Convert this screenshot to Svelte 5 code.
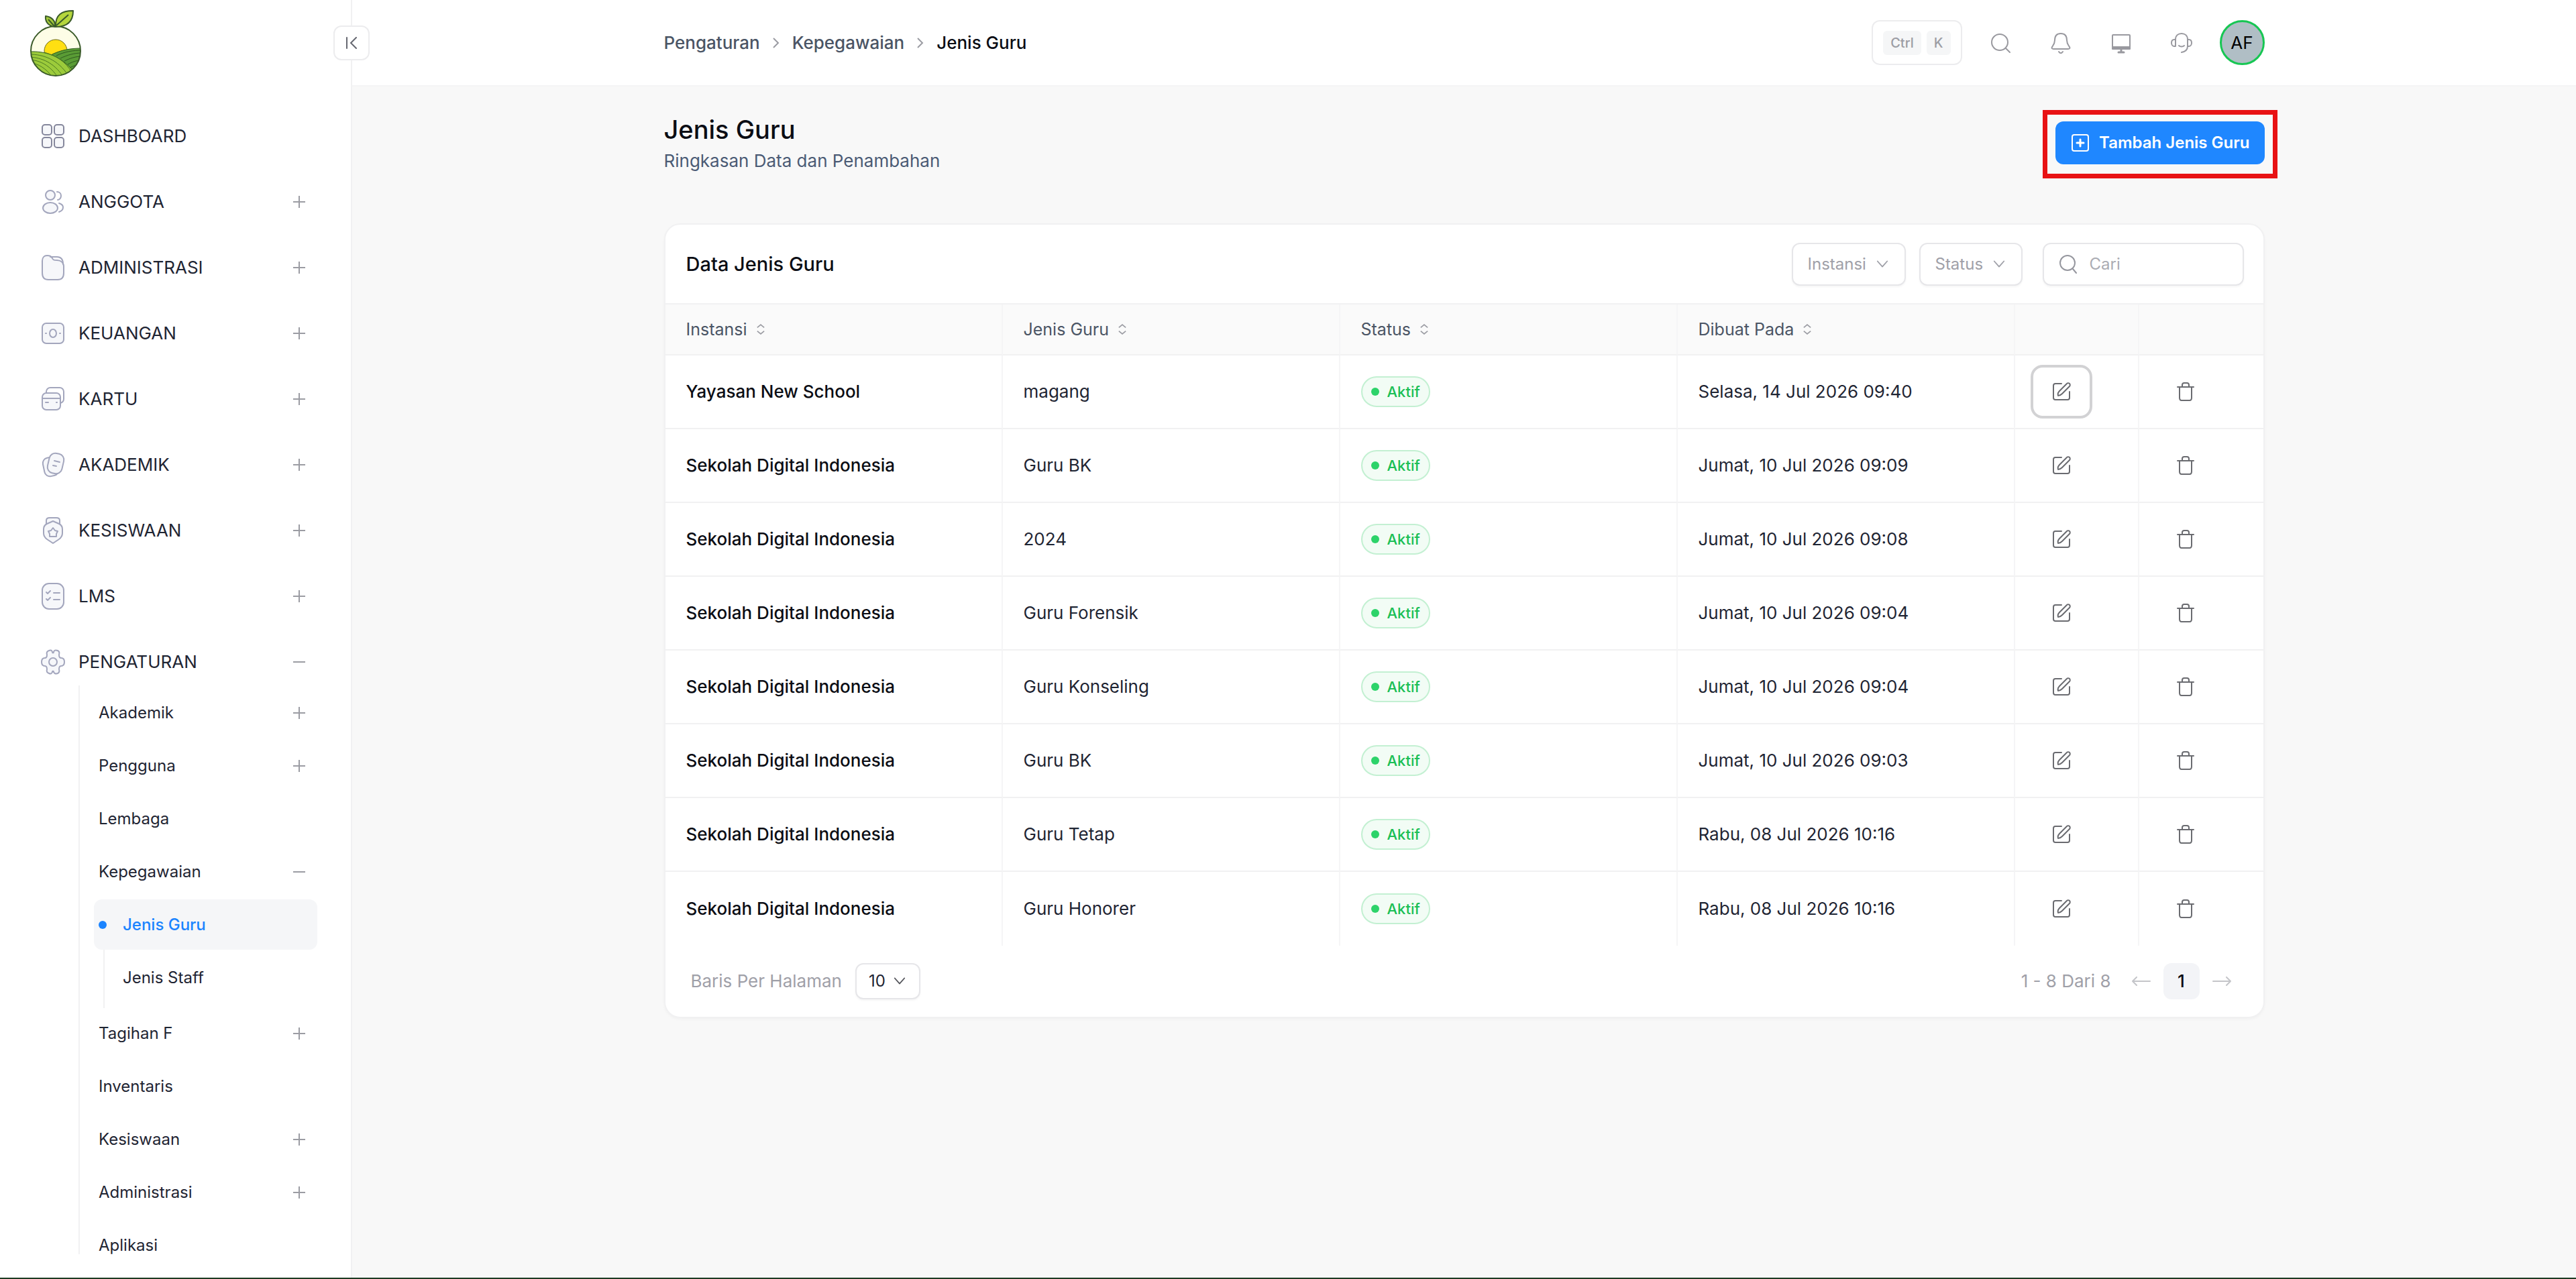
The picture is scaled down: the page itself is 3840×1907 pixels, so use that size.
<script lang="ts">
  type MenuItem = {
    label: string;
    icon?: string;
    expandable?: boolean;
    open?: boolean;
    active?: boolean;
    children?: MenuItem[];
  };

  const menu: MenuItem[] = [
    { label: 'DASHBOARD', icon: 'dashboard' },
    { label: 'ANGGOTA', icon: 'users', expandable: true },
    { label: 'ADMINISTRASI', icon: 'folder', expandable: true },
    { label: 'KEUANGAN', icon: 'money', expandable: true },
    { label: 'KARTU', icon: 'cards', expandable: true },
    { label: 'AKADEMIK', icon: 'notes', expandable: true },
    { label: 'KESISWAAN', icon: 'medal', expandable: true },
    { label: 'LMS', icon: 'checklist', expandable: true }
  ];

  const settings: MenuItem[] = [
    { label: 'Akademik', expandable: true },
    { label: 'Pengguna', expandable: true },
    { label: 'Lembaga' },
    {
      label: 'Kepegawaian',
      expandable: true,
      open: true,
      children: [{ label: 'Jenis Guru', active: true }, { label: 'Jenis Staff' }]
    },
    { label: 'Tagihan F', expandable: true },
    { label: 'Inventaris' },
    { label: 'Kesiswaan', expandable: true },
    { label: 'Administrasi', expandable: true },
    { label: 'Aplikasi' }
  ];

  const columns = ['Instansi', 'Jenis Guru', 'Status', 'Dibuat Pada'];

  const rows = [
    { instansi: 'Yayasan New School', jenis: 'magang', dibuat: 'Selasa, 14 Jul 2026 09:40' },
    { instansi: 'Sekolah Digital Indonesia', jenis: 'Guru BK', dibuat: 'Jumat, 10 Jul 2026 09:09' },
    { instansi: 'Sekolah Digital Indonesia', jenis: '2024', dibuat: 'Jumat, 10 Jul 2026 09:08' },
    { instansi: 'Sekolah Digital Indonesia', jenis: 'Guru Forensik', dibuat: 'Jumat, 10 Jul 2026 09:04' },
    { instansi: 'Sekolah Digital Indonesia', jenis: 'Guru Konseling', dibuat: 'Jumat, 10 Jul 2026 09:04' },
    { instansi: 'Sekolah Digital Indonesia', jenis: 'Guru BK', dibuat: 'Jumat, 10 Jul 2026 09:03' },
    { instansi: 'Sekolah Digital Indonesia', jenis: 'Guru Tetap', dibuat: 'Rabu, 08 Jul 2026 10:16' },
    { instansi: 'Sekolah Digital Indonesia', jenis: 'Guru Honorer', dibuat: 'Rabu, 08 Jul 2026 10:16' }
  ];

  let selectedRow = $state(0);
  let search = $state('');
  let settingsOpen = $state(true);
</script>

{#snippet menuIcon(name?: string)}
  <svg class="menu-icon" viewBox="0 0 36 40" fill="#f6f7fa" stroke="#a3a6bd" stroke-width="2" stroke-linecap="round" stroke-linejoin="round">
    {#if name === 'dashboard'}
      <g stroke="#85879c">
        <rect x="2" y="3" width="14" height="15" rx="4" />
        <rect x="20" y="3" width="14" height="15" rx="4" />
        <rect x="2" y="22" width="14" height="15" rx="4" />
        <rect x="20" y="22" width="14" height="15" rx="4" />
      </g>
    {:else if name === 'users'}
      <circle cx="14" cy="10" r="7" />
      <ellipse cx="14" cy="29" rx="11" ry="8" />
      <path fill="none" d="M24 5c3 0 6 2 6 6s-3 6-5 6M27 22c3 1 6 3 6 6 0 4-3 6-6 7" />
    {:else if name === 'folder'}
      <path d="M2 10c0-5 3-8 7-8 5 0 6 1 8 4 1 3 3 3 7 3 6 0 10 4 10 9v10c0 6-3 10-9 10H11c-6 0-9-4-9-10z" />
      <path fill="none" d="M14 4h10c6 0 9 4 9 11" />
    {:else if name === 'money'}
      <rect x="2" y="5" width="32" height="30" rx="6" />
      <ellipse cx="18" cy="20" rx="5" ry="6" />
      <path d="M7 20h1M28 20h1" />
    {:else if name === 'cards'}
      <rect x="8" y="3" width="26" height="23" rx="6" fill="#fff" />
      <rect x="2" y="11" width="27" height="25" rx="6" />
      <path d="M2 19h27M7 25h4M23 25h1" />
    {:else if name === 'notes'}
      <rect x="4" y="9" width="21" height="28" rx="8" transform="rotate(-12 14 23)" />
      <rect x="11" y="3" width="22" height="30" rx="9" transform="rotate(13 22 18)" />
      <path d="M20 14l8 2M18 21l5 1" />
    {:else if name === 'medal'}
      <path d="M8 10V5c0-3 2-4 5-4h10c3 0 5 1 5 4v5" />
      <path d="M18 6l9 4c4 2 5 4 5 8v6c0 4-1 6-5 9l-9 6-9-6c-4-3-5-5-5-9v-6c0-4 1-6 5-8z" />
      <path d="M18 16l3 4 4 1-2 4v4H13v-4l-2-4 4-1z" />
    {:else if name === 'checklist'}
      <rect x="2" y="1" width="32" height="38" rx="10" />
      <path fill="none" d="M8 14l2 2 4-4M8 24l2 2 4-4M19 15h9M19 25h9" />
    {:else}
      <path d="M12 3c2-1 4-1 5 2 0 2 2 2 2 0 1-3 3-3 6-2 2 1 3 3 2 6 0 3 1 5 3 5 3 0 5 2 5 6s-2 6-5 6c-2 0-3 2-3 5 1 3 0 5-2 6-3 1-5 1-6-2 0-2-2-2-2 0-1 3-3 3-5 2-3-1-4-3-3-6 0-3-1-5-3-5-3 0-5-2-5-6s2-6 5-6c2 0 3-2 3-5-1-3 0-5 3-6z" />
      <circle cx="18" cy="20" r="6" />
    {/if}
  </svg>
{/snippet}

{#snippet sign(open?: boolean)}
  <svg class="sign" viewBox="0 0 18 18" stroke="#9b9ca3" stroke-width="2">
    <path d={open ? 'M0 9h18' : 'M0 9h18M9 0v18'} />
  </svg>
{/snippet}

{#snippet chevron()}
  <svg class="chevron" viewBox="0 0 20 12" fill="none" stroke="currentColor" stroke-width="2" stroke-linecap="round" stroke-linejoin="round">
    <path d="M2 1l8 9 8-9" />
  </svg>
{/snippet}

<div class="layout">
  <aside class="sidebar">
    <a class="logo" href="#home" aria-label="Beranda">
      <svg viewBox="0 0 78 102" stroke-linejoin="round">
        <defs>
          <clipPath id="fruit"><ellipse cx="39" cy="62" rx="37" ry="37" /></clipPath>
        </defs>
        <g clip-path="url(#fruit)">
          <rect y="24" width="78" height="78" fill="#fdfde6" />
          <circle cx="39" cy="62" r="17" fill="#ffdf12" stroke="#6b6a1c" />
          <path d="M30 69C46 60 62 58 78 58v44H50z" fill="#5a9c35" stroke="#2f5a20" />
          <path d="M40 69c12-6 25-8 38-8M46 73c10-5 21-8 32-8M52 77c8-4 17-7 26-7M57 82c7-4 13-6 21-6M60 87c6-3 11-5 18-6" fill="none" stroke="#2f5a20" />
          <path d="M0 63c22-1 46 5 66 30L50 102H0z" fill="#9ccb3b" stroke="#2f5a20" />
          <path d="M0 67c20 0 42 7 58 32M0 71c18 1 36 8 50 29M0 75c16 1 31 9 42 26M0 79c13 2 25 9 34 22M0 84c10 2 19 8 26 16M22 64c18 5 32 14 41 30" fill="none" stroke="#4c7a23" />
        </g>
        <ellipse cx="39" cy="62" rx="37" ry="37" fill="none" stroke="#3b5b2a" stroke-width="2" />
        <path d="M39 26C38 8 48 2 65 2c0 14-6 24-26 24z" fill="#b5d63c" stroke="#3b5b2a" stroke-width="2" />
        <path d="M38 26C28 25 23 18 24 10c9 1 15 7 14 16z" fill="#a3c93a" stroke="#3b5b2a" stroke-width="2" />
        <path d="M40 24L58 8M37 25l-9-10" stroke="#3b5b2a" stroke-width="2" />
      </svg>
    </a>

    <button class="collapse" type="button" aria-label="Ciutkan menu">
      <svg viewBox="0 0 18 18" fill="none" stroke="#666871" stroke-width="2" stroke-linecap="round">
        <path d="M2 1v16M16 1L8 9l8 8" />
      </svg>
    </button>

    <nav class="menu">
      {#each menu as item}
        <button class="menu-item" type="button">
          {@render menuIcon(item.icon)}
          <span class="menu-label">{item.label}</span>
          {#if item.expandable}{@render sign()}{/if}
        </button>
      {/each}
      <button class="menu-item" type="button" aria-expanded={settingsOpen} onclick={() => (settingsOpen = !settingsOpen)}>
        {@render menuIcon()}
        <span class="menu-label">PENGATURAN</span>
        {@render sign(settingsOpen)}
      </button>
    </nav>

    {#if settingsOpen}
      <ul class="submenu">
        {#each settings as item}
          <li>
            <a class="sub-item" href="#{item.label}">
              <span class="menu-label">{item.label}</span>
              {#if item.expandable}{@render sign(item.open)}{/if}
            </a>
            {#if item.children}
              <ul class="nested">
                {#each item.children as child}
                  <li>
                    <a class="sub-item nested-item" class:active={child.active} href="#{child.label}">
                      <span class="dot"></span>
                      {child.label}
                    </a>
                  </li>
                {/each}
              </ul>
            {/if}
          </li>
        {/each}
      </ul>
    {/if}
  </aside>

  <div class="main">
    <header class="topbar">
      <div class="container topbar-inner">
        <nav class="breadcrumb" aria-label="Breadcrumb">
          <a href="#pengaturan">Pengaturan</a>
          <svg viewBox="0 0 10 16" fill="none" stroke="#9b9ca3" stroke-width="2"><path d="M1 1l7 7-7 7" /></svg>
          <a href="#kepegawaian">Kepegawaian</a>
          <svg viewBox="0 0 10 16" fill="none" stroke="#9b9ca3" stroke-width="2"><path d="M1 1l7 7-7 7" /></svg>
          <span class="current">Jenis Guru</span>
        </nav>

        <div class="tools">
          <button class="shortcut" type="button"><kbd>Ctrl</kbd><kbd>K</kbd></button>
          <button class="tool" type="button" aria-label="Cari">
            <svg viewBox="0 0 32 32"><circle cx="15" cy="15" r="12" /><path d="M24 24l6 6" /></svg>
          </button>
          <button class="tool" type="button" aria-label="Notifikasi">
            <svg viewBox="0 0 32 32"><path d="M16 2c-6 0-9 4-9 10 0 5-2 7-4 10-1 2 0 3 2 3h22c2 0 3-1 2-3-2-3-4-5-4-10 0-6-3-10-9-10zM13 29c2 3 4 3 6 0" /></svg>
          </button>
          <button class="tool" type="button" aria-label="Layar">
            <svg viewBox="0 0 32 32"><rect x="3" y="4" width="26" height="20" rx="1" /><path d="M3 22h26v3H3z" fill="currentColor" /><path d="M16 25v5M12 30h8" stroke-width="3" /></svg>
          </button>
          <button class="tool" type="button" aria-label="Bantuan">
            <svg viewBox="0 0 32 32"><path d="M7 11c0-6 4-9 9-9s9 3 9 9v10c0 5-3 8-9 9M7 11H5c-2 0-4 1-4 5 0 3 2 5 4 5h2zM25 11h2c2 0 4 1 4 5 0 3-2 5-4 5h-2zM12 20c2 2 6 2 8 0" /></svg>
          </button>
          <button class="avatar" type="button">AF</button>
        </div>
      </div>
    </header>

    <main class="container content">
      <div class="page-head">
        <div>
          <h1>Jenis Guru</h1>
          <p>Ringkasan Data dan Penambahan</p>
        </div>
        <div class="highlight">
          <button class="primary" type="button">
            <svg viewBox="0 0 28 28" fill="none" stroke="#fff" stroke-width="2" stroke-linecap="round">
              <rect x="2" y="2" width="24" height="24" rx="3" />
              <path d="M14 9v10M9 14h10" stroke-width="3" />
            </svg>
            Tambah Jenis Guru
          </button>
        </div>
      </div>

      <section class="card">
        <div class="card-head">
          <h2>Data Jenis Guru</h2>
          <div class="filters">
            <div class="select">
              <select aria-label="Instansi"><option>Instansi</option></select>
              {@render chevron()}
            </div>
            <div class="select">
              <select aria-label="Status"><option>Status</option></select>
              {@render chevron()}
            </div>
            <label class="search">
              <svg viewBox="0 0 28 28" fill="none" stroke="#96979f" stroke-width="2" stroke-linecap="round"><circle cx="13" cy="12" r="11" /><path d="M21 21l5 6" /></svg>
              <input type="text" placeholder="Cari" aria-label="Cari" bind:value={search} />
            </label>
          </div>
        </div>

        <table>
          <thead>
            <tr>
              {#each columns as column}
                <th>
                  <span class="sort">
                    {column}
                    <svg viewBox="0 0 14 18" fill="none" stroke="#9b9ca3" stroke-width="2"><path d="M1 6l6-5 6 5M1 12l6 5 6-5" /></svg>
                  </span>
                </th>
              {/each}
              <th class="action"></th>
              <th class="action"></th>
            </tr>
          </thead>
          <tbody>
            {#each rows as row, i}
              <tr>
                <td class="strong">{row.instansi}</td>
                <td>{row.jenis}</td>
                <td><span class="badge">Aktif</span></td>
                <td>{row.dibuat}</td>
                <td class="action">
                  <button class="icon-btn" class:focused={selectedRow === i} type="button" aria-label="Ubah" onclick={() => (selectedRow = i)}>
                    <svg viewBox="0 0 28 28"><path d="M14 2H5C3 2 2 3 2 5v18c0 2 1 3 3 3h18c2 0 3-1 3-3V14" /><path d="M9 20c-1-3 0-5 2-7L22 2c1-1 3-1 4 0s1 3 0 4L15 17c-2 2-4 3-6 3z" /></svg>
                  </button>
                </td>
                <td class="action">
                  <button class="icon-btn" type="button" aria-label="Hapus">
                    <svg viewBox="0 0 28 28"><path d="M2 7h24M5 7v16c0 3 1 4 3 4h12c2 0 3-1 3-4V7M9 7V4c0-2 1-3 3-3h4c2 0 3 1 3 3v3" /></svg>
                  </button>
                </td>
              </tr>
            {/each}
          </tbody>
        </table>

        <div class="card-foot">
          <div class="per-page">
            <label for="per-page">Baris Per Halaman</label>
            <div class="select small">
              <select id="per-page"><option>10</option></select>
              {@render chevron()}
            </div>
          </div>
          <div class="pager">
            <span>1 - 8 Dari 8</span>
            <button class="arrow" type="button" aria-label="Sebelumnya">
              <svg viewBox="0 0 28 14"><path d="M27 7H1M7 1L1 7l6 6" /></svg>
            </button>
            <button class="page" type="button">1</button>
            <button class="arrow" type="button" aria-label="Berikutnya">
              <svg viewBox="0 0 28 14"><path d="M1 7h26M21 1l6 6-6 6" /></svg>
            </button>
          </div>
        </div>
      </section>
    </main>
  </div>
</div>

<style>
  :global(body) {
    background: #f8f8f8;
    font-family: Inter, 'Liberation Sans', sans-serif;
    font-size: 26px;
    line-height: 40px;
    color: #1f2533;
  }

  * {
    box-sizing: border-box;
  }

  button,
  input,
  select {
    margin: 0;
    padding: 0;
    border: none;
    background: none;
    font: inherit;
    color: inherit;
  }

  a {
    color: inherit;
    text-decoration: none;
  }

  ul {
    list-style: none;
    margin: 0;
    padding: 0;
  }

  h1,
  h2,
  p {
    margin: 0;
  }

  svg {
    display: block;
    flex-shrink: 0;
  }

  .layout {
    display: flex;
    min-height: 100vh;
    border-bottom: 2px solid #1d3b22;
  }

  /* Sidebar */
  .sidebar {
    position: relative;
    flex: 0 0 525px;
    padding: 14px 50px 0 61px;
    background: #fff;
    border-right: 2px solid #f1f1f2;
  }

  .logo {
    display: block;
    width: 78px;
    margin: 0 0 54px -17px;
  }

  .logo svg {
    width: 78px;
    height: 102px;
  }

  .collapse {
    position: absolute;
    top: 38px;
    right: -28px;
    display: grid;
    place-items: center;
    width: 54px;
    height: 52px;
    background: #fff;
    border: 2px solid #ececee;
    border-radius: 12px;
  }

  .collapse svg {
    width: 18px;
    height: 18px;
  }

  .menu {
    display: flex;
    flex-direction: column;
    gap: 32px;
    margin-bottom: 2px;
  }

  .menu-item {
    display: flex;
    align-items: center;
    gap: 20px;
    height: 66px;
    padding-right: 18px;
    text-align: left;
  }

  .menu-icon {
    width: 36px;
    height: 40px;
  }

  .menu-label {
    flex: 1;
  }

  .sign {
    width: 18px;
    height: 18px;
  }

  .submenu {
    position: relative;
    padding: 3px 0 0 79px;
    font-size: 24px;
  }

  .submenu::before {
    content: '';
    position: absolute;
    top: 0;
    bottom: 24px;
    left: 56px;
    width: 2px;
    background: #f1f1f2;
  }

  .sub-item {
    display: flex;
    align-items: center;
    height: 75px;
    margin-bottom: 4px;
    padding: 0 18px 0 7px;
    border-radius: 12px;
  }

  .nested {
    padding-bottom: 4px;
    background: linear-gradient(#f1f1f2, #f1f1f2) 14px 0 / 2px 100% no-repeat;
  }

  .nested-item {
    gap: 24px;
  }

  .dot {
    width: 12px;
    height: 12px;
    border-radius: 50%;
  }

  .active {
    background: #f5f6f8;
    color: #1b84ff;
    font-weight: 500;
  }

  .active .dot {
    background: #1b84ff;
  }

  /* Main */
  .main {
    flex: 1;
    min-width: 0;
  }

  .container {
    width: 100%;
    max-width: 2386px;
    margin: 0 auto;
  }

  .topbar {
    background: #fff;
    border-bottom: 2px solid #f4f4f5;
  }

  .topbar-inner {
    display: flex;
    align-items: center;
    justify-content: space-between;
    height: 127px;
  }

  .breadcrumb {
    display: flex;
    align-items: center;
    gap: 19px;
    color: #4b5565;
    font-weight: 500;
  }

  .breadcrumb svg {
    width: 10px;
    height: 16px;
  }

  .current {
    color: #0b0d14;
  }

  .tools {
    display: flex;
    align-items: center;
    gap: 24px;
  }

  .shortcut {
    display: flex;
    align-items: center;
    gap: 8px;
    height: 67px;
    padding: 0 15px;
    border: 2px solid #ececee;
    border-radius: 12px;
  }

  kbd {
    padding: 0 11px;
    border-radius: 6px;
    background: #f5f6f7;
    font-family: inherit;
    font-size: 20px;
    line-height: 36px;
    font-weight: 500;
    color: #9c9da4;
  }

  .tool {
    display: grid;
    place-items: center;
    width: 66px;
    height: 66px;
    color: #99999f;
  }

  .tool svg {
    width: 32px;
    height: 32px;
    fill: none;
    stroke: currentColor;
    stroke-width: 2;
    stroke-linecap: round;
    stroke-linejoin: round;
  }

  .avatar {
    width: 67px;
    height: 67px;
    border: 3px solid #17c653;
    border-radius: 50%;
    background: #b0bec5;
    color: #000;
  }

  .content {
    padding-top: 40px;
  }

  .page-head {
    display: flex;
    align-items: center;
    justify-content: space-between;
    margin-bottom: 73px;
  }

  h1 {
    margin-bottom: 3px;
    font-size: 38px;
    line-height: 48px;
    font-weight: 500;
    color: #0b0d14;
  }

  .page-head p {
    color: #4b5b75;
  }

  .highlight {
    margin: -6px -19px -6px 0;
    padding: 10px 12px 14px;
    border: 7px solid #e81214;
  }

  .primary {
    display: flex;
    align-items: center;
    gap: 14px;
    height: 64px;
    padding: 0 22px 0 23px;
    border-radius: 12px;
    background: #1f87ff;
    color: #fff;
    font-size: 24px;
    font-weight: 600;
  }

  .primary svg {
    width: 28px;
    height: 28px;
  }

  .card {
    background: #fff;
    border: 2px solid #f1f1f2;
    border-radius: 24px;
    box-shadow: 0 2px 4px rgba(0, 0, 0, 0.03);
    overflow: hidden;
  }

  .card-head {
    display: flex;
    align-items: center;
    justify-content: space-between;
    height: 119px;
    padding: 0 29px 0 31px;
    border-bottom: 2px solid #f1f1f2;
  }

  h2 {
    font-size: 29px;
    font-weight: 500;
    color: #0b0d14;
  }

  .filters {
    display: flex;
    gap: 20px;
    font-size: 24px;
  }

  .select {
    display: grid;
    align-items: center;
    color: #9fa0a8;
  }

  .select > :global(*) {
    grid-area: 1 / 1;
  }

  select {
    appearance: none;
    height: 64px;
    padding: 0 56px 0 22px;
    border: 2px solid #e6e6e9;
    border-radius: 12px;
    background: #fff;
    box-shadow: 0 2px 3px rgba(0, 0, 0, 0.04);
  }

  .chevron {
    justify-self: end;
    width: 18px;
    height: 12px;
    margin-right: 26px;
    pointer-events: none;
  }

  .search {
    display: flex;
    align-items: center;
    gap: 18px;
    width: 300px;
    height: 64px;
    margin-left: 10px;
    padding: 0 22px;
    border: 2px solid #e6e6e9;
    border-radius: 12px;
    box-shadow: 0 2px 3px rgba(0, 0, 0, 0.04);
  }

  .search svg {
    width: 28px;
    height: 28px;
  }

  .search input {
    min-width: 0;
    flex: 1;
    outline: none;
  }

  .search input::placeholder {
    color: #abacb3;
  }

  table {
    width: 100%;
    table-layout: fixed;
    border-collapse: separate;
    border-spacing: 0;
  }

  th,
  td {
    padding: 0 31px;
    border-right: 2px solid #f5f5f6;
    border-bottom: 2px solid #f1f1f2;
    text-align: left;
  }

  th {
    height: 76px;
    background: #fafafa;
    color: #4b5565;
    font-size: 25px;
    font-weight: 400;
  }

  td {
    height: 110px;
  }

  th:last-child,
  td:last-child {
    border-right: none;
  }

  tbody tr:last-child td {
    border-bottom: none;
  }

  .strong {
    color: #0b0d14;
    font-weight: 500;
  }

  .action {
    width: 185px;
    padding: 0 27px;
  }

  .sort {
    display: inline-flex;
    align-items: center;
    gap: 14px;
  }

  .sort svg {
    width: 12px;
    height: 18px;
  }

  .badge {
    display: inline-flex;
    align-items: center;
    gap: 12px;
    height: 46px;
    padding: 0 13px;
    border: 2px solid #c3f0d2;
    border-radius: 23px;
    background: #f2fcf5;
    color: #1bbf55;
    font-size: 22px;
    font-weight: 500;
  }

  .badge::before {
    content: '';
    width: 12px;
    height: 12px;
    border-radius: 50%;
    background: #2dd36a;
  }

  .icon-btn {
    display: grid;
    place-items: center;
    width: 84px;
    height: 72px;
    border-radius: 14px;
    color: #6a6b70;
  }

  .focused {
    outline: 4px solid #d2d2d4;
  }

  .icon-btn svg {
    width: 28px;
    height: 28px;
    fill: none;
    stroke: currentColor;
    stroke-width: 2;
    stroke-linecap: round;
    stroke-linejoin: round;
  }

  .card-foot {
    display: flex;
    align-items: center;
    justify-content: space-between;
    height: 106px;
    padding: 0 35px 0 38px;
    color: #9fa0a8;
  }

  .per-page {
    display: flex;
    align-items: center;
    gap: 20px;
  }

  .small {
    color: #55565c;
  }

  .small select {
    height: 54px;
    padding: 0 50px 0 18px;
    color: #1f2533;
    font-size: 24px;
  }

  .small :global(.chevron) {
    margin-right: 22px;
  }

  .pager {
    display: flex;
    align-items: center;
    gap: 6px;
  }

  .pager span {
    margin-right: 12px;
  }

  .arrow {
    display: grid;
    place-items: center;
    width: 54px;
    height: 54px;
  }

  .arrow svg {
    width: 28px;
    height: 14px;
    fill: none;
    stroke: #c4c5c9;
    stroke-width: 2;
    stroke-linecap: round;
    stroke-linejoin: round;
  }

  .page {
    width: 54px;
    height: 54px;
    border-radius: 12px;
    background: #f3f4f7;
    color: #0b0d14;
    font-weight: 500;
  }
</style>
